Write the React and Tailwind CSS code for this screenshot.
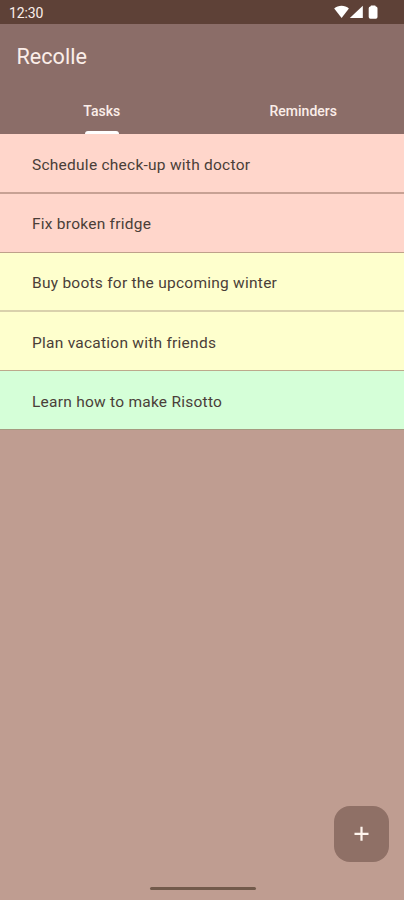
import React from "react";

const tasks = [
  { id: 1, title: "Schedule check-up with doctor", row: "h-[60px] pt-[5px] border-b-2 bg-[#ffd6cb] border-[#c7a194]" },
  { id: 2, title: "Fix broken fridge", row: "h-[59px] pt-[3px] border-b bg-[#ffd6cb] border-[#bfa18b]" },
  { id: 3, title: "Buy boots for the upcoming winter", row: "h-[59px] pt-[4px] border-b-2 bg-[#feffcd] border-[#d9d1ac]" },
  { id: 4, title: "Plan vacation with friends", row: "h-[59px] pt-[5px] border-b bg-[#feffcd] border-[#bda98c]" },
  { id: 5, title: "Learn how to make Risotto", row: "h-[59px] pt-[5px] border-b bg-[#d5ffd8] border-[#a59a80]" },
];

const StatusBar = () => (
  <div className="flex h-6 items-center justify-between bg-[#5e4137] pl-[9px] pr-[25px] text-white">
    <span className="mt-[2px] text-[14px] leading-none tracking-[-0.1px] text-[#fbeee9]">12:30</span>
    <svg width="45" height="14" viewBox="0 0 45 14" fill="currentColor">
      {/* Wifi */}
      <path d="M0.2 3.5C4.1 -0.2 11 -0.2 14.9 3.5L7.6 13Z" />
      {/* Signal */}
      <path d="M28.8 0.7V13H15.8Z" />
      {/* Battery */}
      <path d="M37 0.5H41.2L41.8 1.5Q43.5 1.8 43.5 3.2V12Q43.5 13.7 41.8 13.7H36.4Q34.7 13.7 34.7 12V3.2Q34.7 1.8 36.4 1.5Z" />
    </svg>
  </div>
);

const Header = () => (
  <header className="h-[110px] bg-[#8b6d68] text-[#fbeee9]">
    <h1 className="flex h-[66px] items-center pl-[16.5px] pt-px text-[21.6px] font-normal">Recolle</h1>
    <nav className="grid h-11 grid-cols-2 pl-px text-[14px] font-medium">
      <button className="flex flex-col items-center justify-between">
        <span className="mt-[11px] leading-5">Tasks</span>
        <span className="h-[3px] w-[34px] rounded-t-[3px] bg-white" />
      </button>
      <button className="flex flex-col items-center">
        <span className="mt-[11px] leading-5">Reminders</span>
      </button>
    </nav>
  </header>
);

const TaskList = () => (
  <ul>
    {tasks.map((task) => (
      <li key={task.id} className={`flex items-center pl-8 ${task.row}`}>
        <span className="text-[15.5px] tracking-[0.25px] text-[#4a3e38]">{task.title}</span>
      </li>
    ))}
  </ul>
);

const App = () => {
  return (
    <div className="flex h-[900px] w-[404px] flex-col overflow-hidden bg-[#bf9d91] font-['Roboto',sans-serif]">
      <StatusBar />
      <Header />
      <TaskList />

      <div className="mt-auto flex justify-end pr-[15px]">
        <button
          aria-label="Add task"
          className="flex h-14 w-[55px] items-center justify-center rounded-2xl bg-[#8f7066] text-[#fff5ee]"
        >
          <svg width="16" height="16" viewBox="0 0 16 16" stroke="currentColor" strokeWidth="2.2">
            <path d="M7.5 0.8V14.8M0.5 7.8H14.5" />
          </svg>
        </button>
      </div>

      {/* Gesture bar */}
      <div className="flex h-[38px] justify-center pl-[2px] pt-[24.5px]">
        <div className="h-[3.5px] w-[106px] rounded-full bg-[#725a4b]" />
      </div>
    </div>
  );
};

export default App;
